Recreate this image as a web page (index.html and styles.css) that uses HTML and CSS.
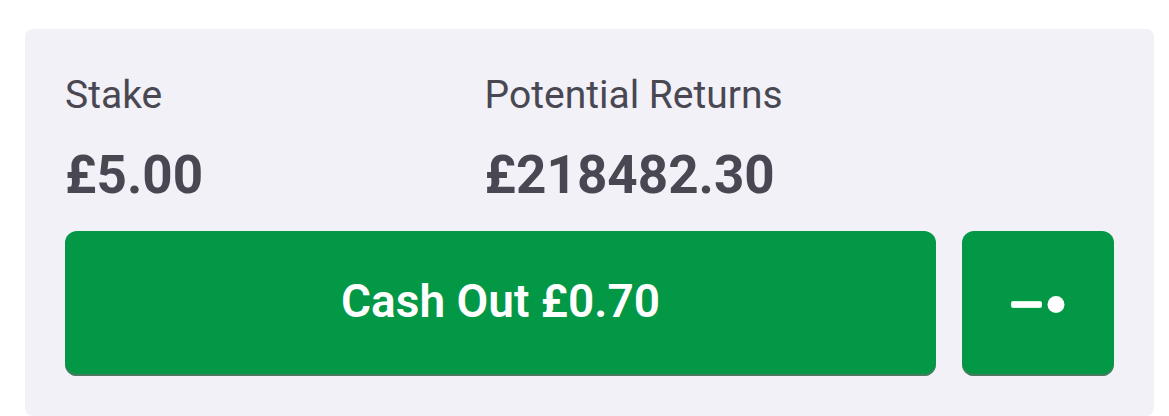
FILE: index.html
```html
<!DOCTYPE html>
<html lang="en">
<head>
  <meta charset="UTF-8">
  <meta name="viewport" content="width=device-width, initial-scale=1.0">
  <title>Cash Out</title>
  <link rel="stylesheet" href="styles.css">
</head>
<body>
  <main class="bet-card">
    <dl class="summary">
      <div class="stake">
        <dt>Stake</dt>
        <dd>£5.00</dd>
      </div>
      <div class="returns">
        <dt>Potential Returns</dt>
        <dd>£218482.30</dd>
      </div>
    </dl>
    <div class="actions">
      <button type="button" class="btn cash-out">Cash Out £0.70</button>
      <button type="button" class="btn partial" aria-label="Partial cash out">
        <svg width="54" height="18" viewBox="0 0 54 18" aria-hidden="true">
          <rect x="0" y="6" width="31" height="7" rx="2" fill="#d5fbe3"/>
          <rect x="1" y="7" width="29" height="5" rx="1" fill="#fff"/>
          <circle cx="45" cy="9.5" r="8.5" fill="#fff"/>
        </svg>
      </button>
    </div>
  </main>
</body>
</html>
```
FILE: styles.css
```css
body {
  margin: 0;
  padding: 29px 15px 0 25px;
  background-color: #fff;
  color: #494852;
  font-family: Roboto, sans-serif;
}
.bet-card {
  padding: 40px;
  border-radius: 8px;
  background-color: #f2f1f8;
}
.summary {
  display: grid;
  grid-template-columns: 2fr 3fr;
  margin: 0;
}
dt {
  font-size: 39px;
  line-height: 52px;
}
dd {
  margin: 22px 0 0;
  font-size: 53px;
  font-weight: 700;
  line-height: 64px;
}
.actions {
  display: flex;
  gap: 26px;
  margin-top: 24px;
}
.btn {
  height: 145px;
  padding: 0;
  border: none;
  border-radius: 12px;
  background-color: #029845;
  box-shadow: inset 0 -2px 1px #4f7a62;
  color: #fff;
  font-family: inherit;
  font-size: 46px;
  font-weight: 600;
  cursor: pointer;
}
.cash-out {
  flex: 1;
  padding-bottom: 6px;
}
.partial {
  display: flex;
  align-items: center;
  justify-content: center;
  width: 152px;
}
```
